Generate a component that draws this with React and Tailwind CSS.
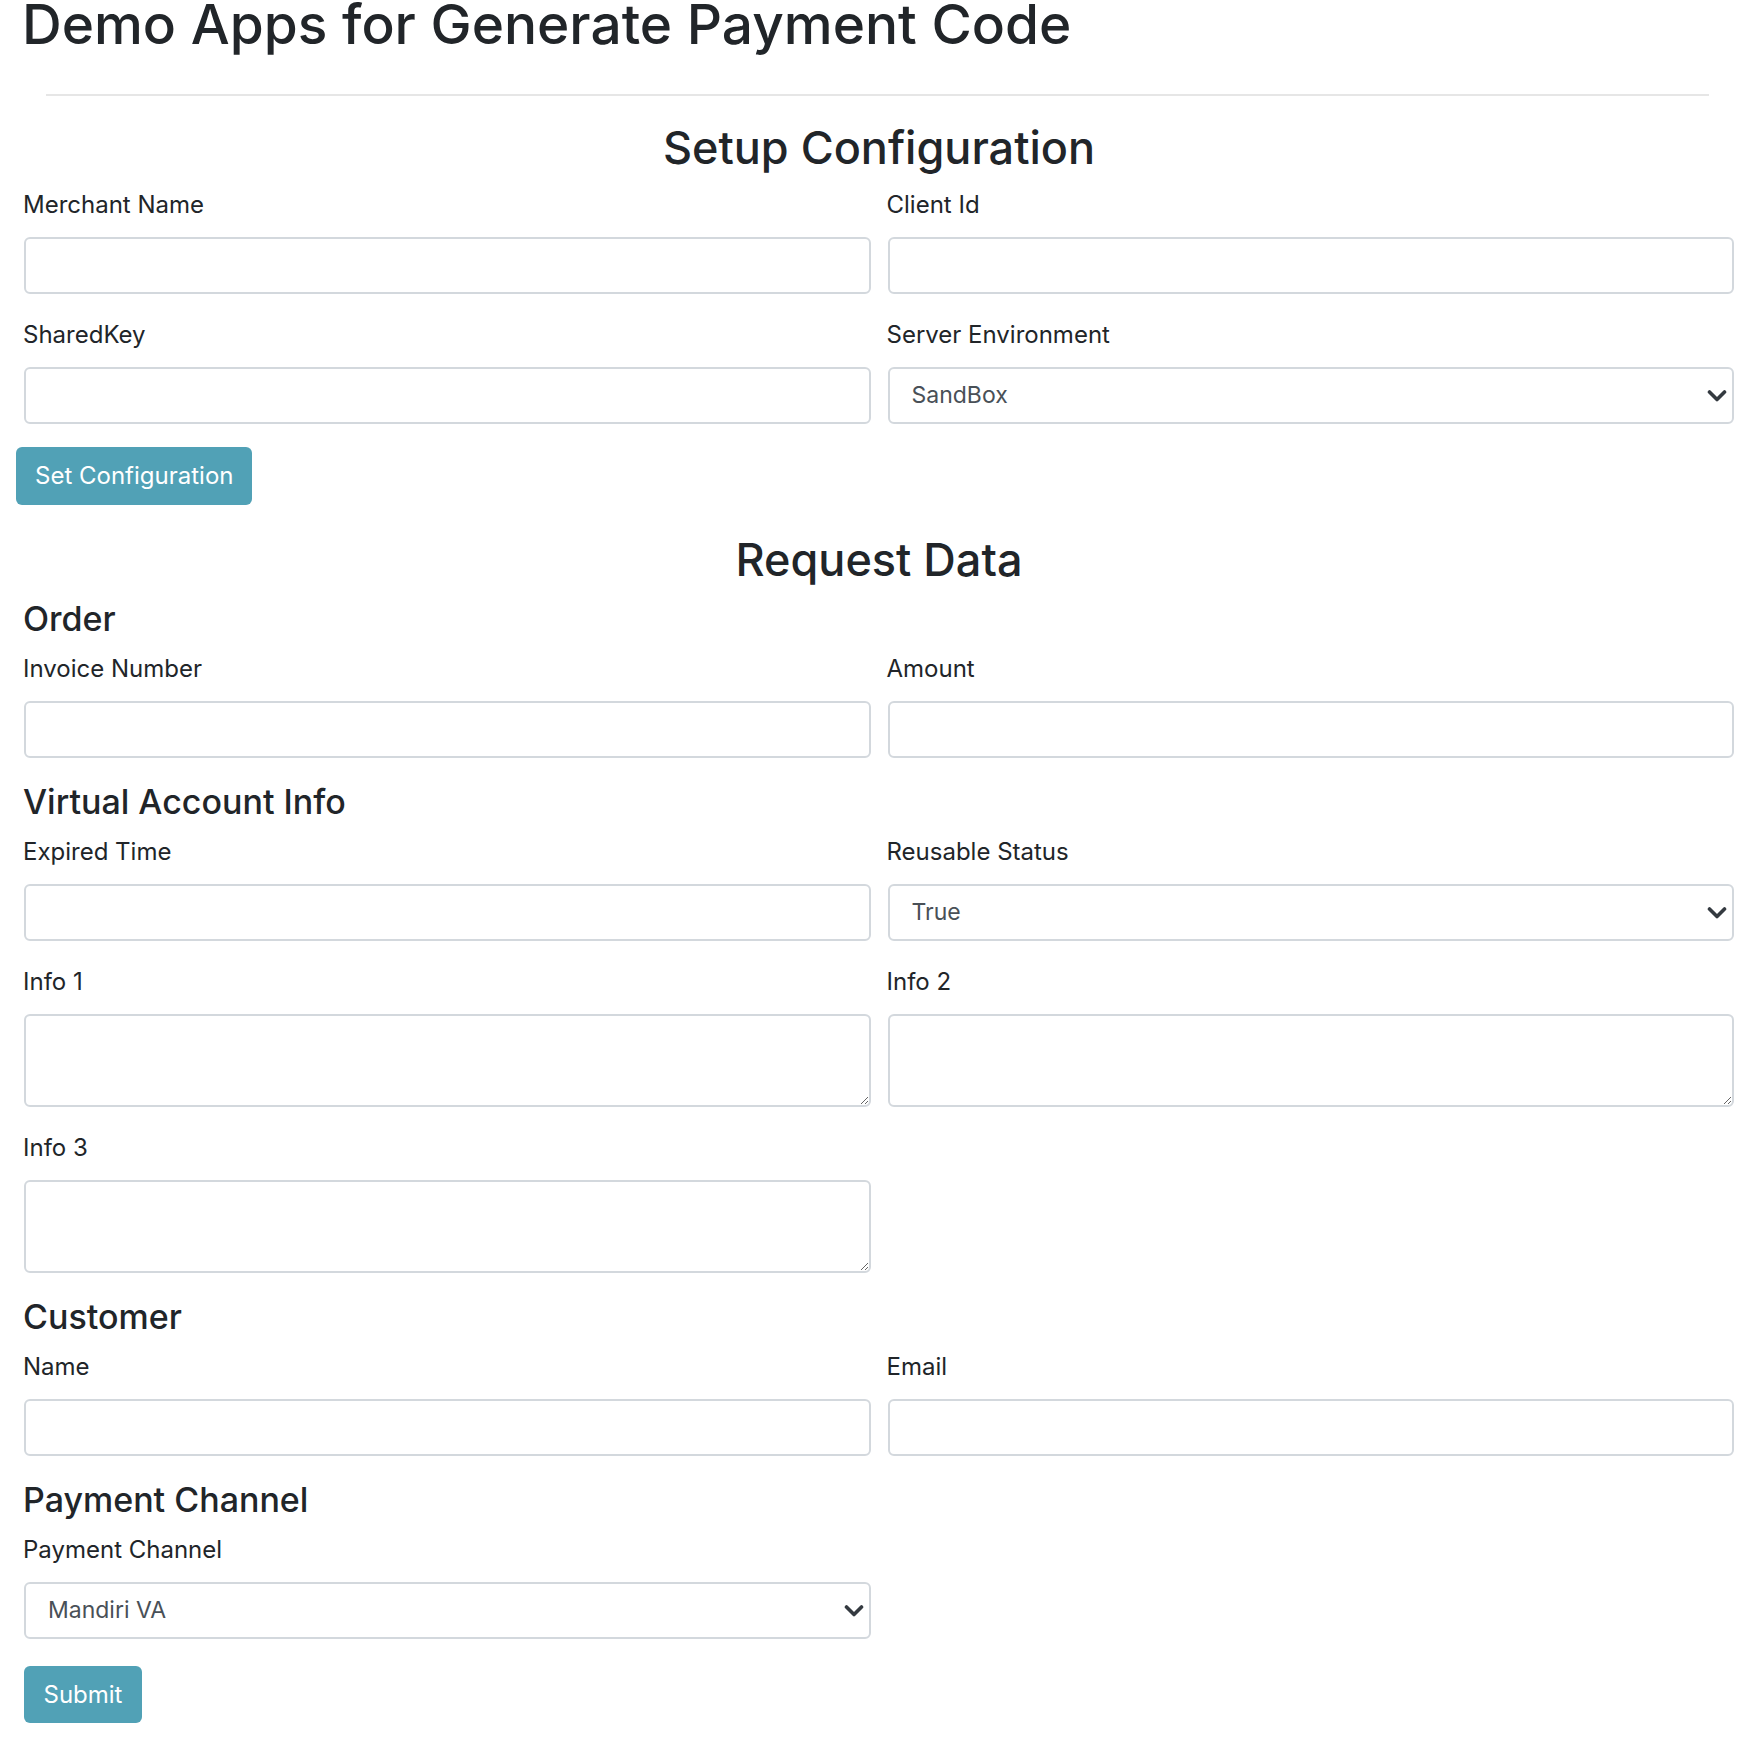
import React from "react";

const textFont = "[font-family:Inter,'Noto_Sans',sans-serif]";

function Label({ children }) {
  return (
    <label className="block text-[24px] leading-[36px] mb-[14px] text-[#212529] -ml-[1px]">
      {children}
    </label>
  );
}

function Field({ label, children }) {
  return (
    <div className="mb-[23px]">
      <Label>{label}</Label>
      {children}
    </div>
  );
}

function TextInput() {
  return (
    <input
      type="text"
      className="block w-full h-[57px] rounded-[6px] border-2 border-[#d3d8dd] bg-white px-[18px] text-[23px] text-[#495057] outline-none"
    />
  );
}

function TextArea() {
  return (
    <textarea
      rows={2}
      className="block w-full h-[93px] rounded-[6px] border-2 border-[#d3d8dd] bg-white px-[18px] py-[9px] text-[23px] text-[#495057] outline-none resize-y"
    />
  );
}

function Select({ options }) {
  return (
    <div className="relative">
      <select className="block w-full h-[57px] appearance-none rounded-[6px] border-2 border-[#d3d8dd] bg-white pl-[22px] pr-[40px] text-[23px] text-[#495057] outline-none">
        {options.map((o) => (
          <option key={o}>{o}</option>
        ))}
      </select>
      {/* chevron */}
      <svg
        className="pointer-events-none absolute right-[7px] top-1/2 -translate-y-1/2"
        width="20"
        height="13"
        viewBox="0 0 20 13"
      >
        <path
          d="M2.5 2.5 L10 10 L17.5 2.5"
          fill="none"
          stroke="#343a40"
          strokeWidth="3.6"
          strokeLinecap="round"
          strokeLinejoin="round"
        />
      </svg>
    </div>
  );
}

function SectionTitle({ children }) {
  return (
    <h4 className="text-[34px] leading-[42px] font-medium mb-[11px] text-[#212529] -ml-[1px]">
      {children}
    </h4>
  );
}

export default function App() {
  return (
    <div className={`${textFont} bg-white text-[#212529] min-h-[1742px] pl-[24px] pr-[16px]`}>
      {/* ------------------ Header ------------------ */}
      <h1 className="text-[55px] leading-[48px] font-medium -ml-[2px]">
        Demo Apps for Generate Payment Code
      </h1>
      <div className="mt-[46px] ml-[22px] mr-[25px] h-[2px] bg-[#e6e6e6]" />

      {/* ------------------ Setup Configuration ------------------ */}
      <h2 className="mt-[24px] mb-[11px] text-center text-[45px] leading-[56px] font-medium">
        Setup Configuration
      </h2>

      <div className="grid grid-cols-2 gap-x-[17px]">
        <Field label="Merchant Name">
          <TextInput />
        </Field>
        <Field label="Client Id">
          <TextInput />
        </Field>
        <Field label="SharedKey">
          <TextInput />
        </Field>
        <Field label="Server Environment">
          <Select options={["SandBox", "Production"]} />
        </Field>
      </div>

      <button className="-ml-[8px] h-[58px] px-[19px] rounded-[6px] bg-[#51a1b6] text-white text-[24px]">
        Set Configuration
      </button>

      {/* ------------------ Request Data ------------------ */}
      <h2 className="mt-[27px] mb-[10px] text-center text-[45px] leading-[56px] font-medium">
        Request Data
      </h2>

      <SectionTitle>Order</SectionTitle>
      <div className="grid grid-cols-2 gap-x-[17px]">
        <Field label="Invoice Number">
          <TextInput />
        </Field>
        <Field label="Amount">
          <TextInput />
        </Field>
      </div>

      <SectionTitle>Virtual Account Info</SectionTitle>
      <div className="grid grid-cols-2 gap-x-[17px]">
        <Field label="Expired Time">
          <TextInput />
        </Field>
        <Field label="Reusable Status">
          <Select options={["True", "False"]} />
        </Field>
        <Field label="Info 1">
          <TextArea />
        </Field>
        <Field label="Info 2">
          <TextArea />
        </Field>
        <Field label="Info 3">
          <TextArea />
        </Field>
      </div>

      <SectionTitle>Customer</SectionTitle>
      <div className="grid grid-cols-2 gap-x-[17px]">
        <Field label="Name">
          <TextInput />
        </Field>
        <Field label="Email">
          <TextInput />
        </Field>
      </div>

      <SectionTitle>Payment Channel</SectionTitle>
      <div className="grid grid-cols-2 gap-x-[17px]">
        <Field label="Payment Channel">
          <Select options={["Mandiri VA", "BCA VA", "BNI VA"]} />
        </Field>
      </div>

      <button className="mt-[4px] h-[57px] w-[118px] rounded-[6px] bg-[#51a1b6] text-white text-[24px]">
        Submit
      </button>
    </div>
  );
}
